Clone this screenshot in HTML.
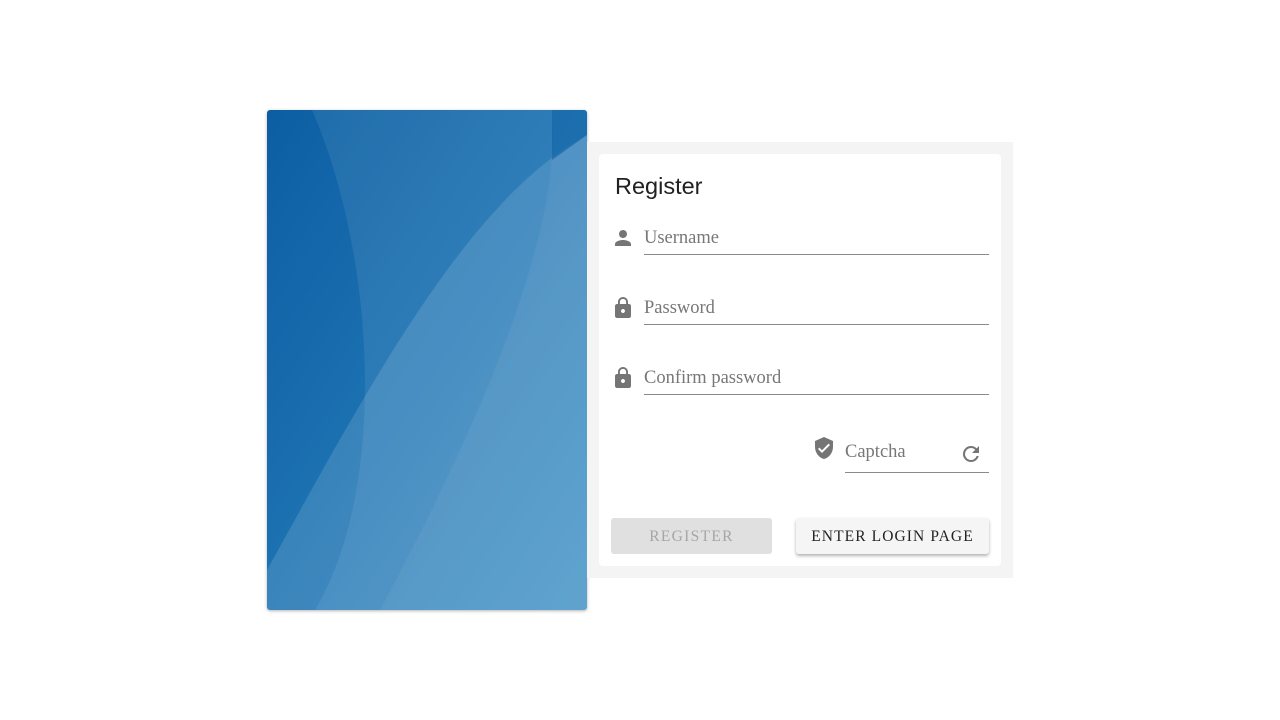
<!DOCTYPE html>
<html><head><style>
body{margin:0;width:1280px;height:720px;background:#fff;position:relative;overflow:hidden;font-family:"Liberation Serif",serif}
.blue{position:absolute;left:267px;top:110px;width:320px;height:500px;border-radius:3px;overflow:hidden;box-shadow:0 1px 3px rgba(0,0,0,.3)}
.gray{position:absolute;left:587px;top:142px;width:426px;height:436px;background:#f4f4f4}
.card{position:absolute;left:599px;top:154px;width:402px;height:412px;background:#fff;border-radius:4px}
.title{position:absolute;left:615px;top:173px;font:23.5px "Liberation Sans",sans-serif;color:#212121}
.field{position:absolute;border-bottom:1px solid #8a8a8a;color:#777;font-size:18.5px;box-sizing:border-box;padding-top:2px}
.ic{position:absolute;fill:#757575}
.btn{position:absolute;top:518px;height:36px;line-height:38px;text-align:center;font-size:15.5px;letter-spacing:1.3px;border-radius:3px}
</style></head><body>
<div class="blue"><svg width="320" height="500" viewBox="0 0 320 500">
<defs><linearGradient id="g" x1="0" y1="0" x2="1" y2="1"><stop offset="0" stop-color="#0c5ea3"/><stop offset="1" stop-color="#2f88c2"/></linearGradient></defs>
<rect width="320" height="500" fill="url(#g)"/>
<path d="M45 0 C110 150 120 380 48 500 L320 500 L320 0Z" fill="#fff" opacity=".08"/>
<path d="M0 460 C100 280 200 90 320 25 L320 500 L0 500Z" fill="#fff" opacity=".13"/>
<path d="M285 0 C295 120 220 300 113 500 L320 500 L320 0Z" fill="#fff" opacity=".05"/>
<path d="M285 0 L320 0 L320 25 L285 50Z" fill="#0a5fa3" opacity=".6"/>
</svg></div>
<div class="gray"></div><div class="card"></div>
<div class="title">Register</div>
<svg class="ic" style="left:611px;top:226px" width="24" height="24" viewBox="0 0 24 24"><path d="M12 12c2.2 0 4-1.8 4-4s-1.8-4-4-4-4 1.8-4 4 1.8 4 4 4zm0 2c-2.7 0-8 1.3-8 4v2h16v-2c0-2.7-5.3-4-8-4z"/></svg>
<div class="field" style="left:644px;top:226px;width:345px;height:29px">Username</div>
<svg class="ic" style="left:611px;top:296px" width="24" height="24" viewBox="0 0 24 24"><path d="M18 8h-1V6c0-2.8-2.2-5-5-5S7 3.2 7 6v2H6c-1.1 0-2 .9-2 2v10c0 1.1.9 2 2 2h12c1.1 0 2-.9 2-2V10c0-1.1-.9-2-2-2zm-6 9c-1.1 0-2-.9-2-2s.9-2 2-2 2 .9 2 2-.9 2-2 2zm3.1-9H8.9V6c0-1.7 1.4-3.1 3.1-3.1s3.1 1.4 3.1 3.1v2z"/></svg>
<div class="field" style="left:644px;top:296px;width:345px;height:29px">Password</div>
<svg class="ic" style="left:611px;top:366px" width="24" height="24" viewBox="0 0 24 24"><path d="M18 8h-1V6c0-2.8-2.2-5-5-5S7 3.2 7 6v2H6c-1.1 0-2 .9-2 2v10c0 1.1.9 2 2 2h12c1.1 0 2-.9 2-2V10c0-1.1-.9-2-2-2zm-6 9c-1.1 0-2-.9-2-2s.9-2 2-2 2 .9 2 2-.9 2-2 2zm3.1-9H8.9V6c0-1.7 1.4-3.1 3.1-3.1s3.1 1.4 3.1 3.1v2z"/></svg>
<div class="field" style="left:644px;top:366px;width:345px;height:29px">Confirm password</div>
<svg class="ic" style="left:812px;top:436px" width="24" height="24" viewBox="0 0 24 24"><path d="M12 1L3 5v6c0 5.5 3.8 10.7 9 12 5.2-1.3 9-6.5 9-12V5l-9-4zm-2 16l-4-4 1.4-1.4 2.6 2.6 6.6-6.6L18 9l-8 8z"/></svg>
<div class="field" style="left:845px;top:440px;width:144px;height:33px">Captcha</div>
<svg class="ic" style="left:959px;top:442px" width="24" height="24" viewBox="0 0 24 24"><path d="M17.65 6.35A7.96 7.96 0 0 0 12 4a8 8 0 1 0 7.73 10h-2.08A6 6 0 1 1 12 6c1.66 0 3.14.69 4.22 1.78L13 11h7V4l-2.35 2.35z"/></svg>
<div class="btn" style="left:611px;width:161px;background:#e0e0e0;color:#a6a6a6">REGISTER</div>
<div class="btn" style="left:796px;width:193px;background:#f5f5f5;color:#222;box-shadow:0 2px 3px rgba(0,0,0,.3);letter-spacing:1.1px">ENTER LOGIN PAGE</div>
</body></html>
